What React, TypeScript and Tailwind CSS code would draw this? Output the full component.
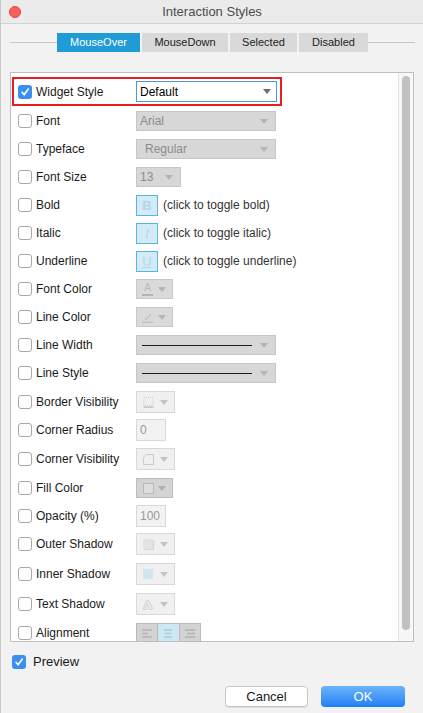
import type { ReactNode } from "react";

function Arrow({ color = "#b5b5b5" }: { color?: string }) {
  return (
    <svg width="8" height="5" viewBox="0 0 8 5" className="shrink-0">
      <path d="M0 0h8L4 5z" fill={color} />
    </svg>
  );
}

function Box({ on }: { on?: boolean }) {
  if (on) {
    return (
      <span className="flex h-[14px] w-[14px] shrink-0 items-center justify-center rounded-[3px] bg-[#3b8ff1]">
        <svg width="10" height="10" viewBox="0 0 10 10">
          <path
            d="M2 5.3 4.1 7.8 8.3 2"
            fill="none"
            stroke="#fff"
            strokeWidth="1.6"
            strokeLinecap="round"
            strokeLinejoin="round"
          />
        </svg>
      </span>
    );
  }
  return <span className="h-[14px] w-[14px] shrink-0 rounded-[3px] border border-[#a8a8a8] bg-white" />;
}

function GraySelect({ text, w, indent }: { text: string; w: string; indent?: boolean }) {
  return (
    <div
      className={`flex h-[20px] ${w} items-center justify-between border border-[#c6c6c6] bg-[#d7d7d7] pr-[7px] text-[12px] text-[#8c8c8c] ${
        indent ? "pl-[8px]" : "pl-[3px]"
      }`}
    >
      <span>{text}</span>
      <Arrow />
    </div>
  );
}

function LineSelect() {
  return (
    <div className="flex h-[20px] w-[140px] items-center gap-[8px] border border-[#c6c6c6] bg-[#d7d7d7] pl-[5px] pr-[7px]">
      <span className="h-px flex-1 bg-[#1e1e1e]" />
      <Arrow />
    </div>
  );
}

function SmallDrop({ children }: { children: ReactNode }) {
  return (
    <div className="flex h-[20px] w-[37px] items-center justify-between border border-[#c8c8c8] bg-[#dadada] pl-[5px] pr-[6px]">
      {children}
      <Arrow />
    </div>
  );
}

function LightDrop({ children, dark }: { children: ReactNode; dark?: boolean }) {
  return (
    <div
      className={`flex items-center justify-between border pl-[6px] pr-[6px] ${
        dark ? "h-[20px] w-[37px] border-[#bdbdbd] bg-[#d4d4d4]" : "h-[22px] w-[39px] border-[#d9d9d9] bg-[#f0f0f0]"
      }`}
    >
      {children}
      <Arrow color={dark ? "#b0b0b0" : "#c4c4c4"} />
    </div>
  );
}

function NumInput({ value }: { value: string }) {
  return (
    <div className="flex h-[22px] w-[30px] items-center border border-[#d9d9d9] bg-[#f2f2f2] pl-[3px] text-[12px] text-[#9a9a9a]">
      {value}
    </div>
  );
}

function Toggle({ letter, cls, hint }: { letter: string; cls: string; hint: string }) {
  return (
    <div className="flex items-center gap-[5px]">
      <div className="flex h-[21px] w-[22px] items-center justify-center border border-[#5ab4e2] bg-[#d2ebf7]">
        <span className={`text-[13px] leading-none text-[#b5d6e6] ${cls}`}>{letter}</span>
      </div>
      <span className="text-[12px] text-[#333]">{hint}</span>
    </div>
  );
}

function AlignLines({ kind }: { kind: "l" | "c" | "r" }) {
  const x = kind === "l" ? [0, 0, 0] : kind === "c" ? [1, 2, 1] : [0, 2, 0];
  const w = kind === "l" ? [10, 6, 10] : kind === "c" ? [8, 6, 8] : [10, 8, 10];
  return (
    <svg width="10" height="9" viewBox="0 0 10 9">
      {[1, 4.5, 8].map((y, i) => (
        <rect key={y} x={kind === "r" ? 10 - w[i] : x[i]} y={y - 0.75} width={w[i]} height="1.5" fill={kind === "c" ? "#a9cadb" : "#b2b2b2"} />
      ))}
    </svg>
  );
}

function Alignment() {
  return (
    <div className="flex h-[21px] w-[65px] border border-[#b9b9b9]">
      <div className="flex flex-1 items-center justify-center bg-[#d3d3d3]">
        <AlignLines kind="l" />
      </div>
      <div className="flex flex-1 items-center justify-center border-x border-[#b9b9b9] bg-[#cde8f5]">
        <AlignLines kind="c" />
      </div>
      <div className="flex flex-1 items-center justify-center bg-[#d3d3d3]">
        <AlignLines kind="r" />
      </div>
    </div>
  );
}

const rows: { label: string; mt: string; control: ReactNode }[] = [
  { label: "Font", mt: "mt-[1px]", control: <GraySelect text="Arial" w="w-[140px]" /> },
  { label: "Typeface", mt: "", control: <GraySelect text="Regular" w="w-[140px]" indent /> },
  { label: "Font Size", mt: "", control: <GraySelect text="13" w="w-[45px]" /> },
  { label: "Bold", mt: "", control: <Toggle letter="B" cls="font-bold" hint="(click to toggle bold)" /> },
  {
    label: "Italic",
    mt: "",
    control: <Toggle letter="I" cls="italic font-['Liberation_Serif',serif]" hint="(click to toggle italic)" />,
  },
  { label: "Underline", mt: "", control: <Toggle letter="U" cls="underline" hint="(click to toggle underline)" /> },
  {
    label: "Font Color",
    mt: "",
    control: (
      <SmallDrop>
        <span className="flex flex-col items-center">
          <span className="text-[10px] leading-[10px] text-[#b8b8b8]">A</span>
          <span className="mt-[1px] h-[2px] w-[11px] bg-[#b3b3b3]" />
        </span>
      </SmallDrop>
    ),
  },
  {
    label: "Line Color",
    mt: "",
    control: (
      <SmallDrop>
        <svg width="12" height="12" viewBox="0 0 12 12">
          <path d="M3 8 8.5 2.5l1 1L4 9H3z" fill="#c2c2c2" />
          <rect x="0" y="10.5" width="11" height="1.5" fill="#c2c2c2" />
        </svg>
      </SmallDrop>
    ),
  },
  { label: "Line Width", mt: "", control: <LineSelect /> },
  { label: "Line Style", mt: "", control: <LineSelect /> },
  {
    label: "Border Visibility",
    mt: "mt-[1px]",
    control: (
      <LightDrop>
        <svg width="11" height="11" viewBox="0 0 11 11">
          <rect x="1" y="0.5" width="9" height="8" fill="none" stroke="#cfcfcf" strokeDasharray="1 1" />
          <rect x="0.5" y="9.5" width="10" height="1.3" fill="#bcbcbc" />
        </svg>
      </LightDrop>
    ),
  },
  { label: "Corner Radius", mt: "", control: <NumInput value="0" /> },
  {
    label: "Corner Visibility",
    mt: "mt-[1px]",
    control: (
      <LightDrop>
        <svg width="11" height="11" viewBox="0 0 11 11">
          <path d="M0.5 10.5V5A4.5 4.5 0 0 1 5 0.5h5.5v10z" fill="none" stroke="#c9c9c9" />
        </svg>
      </LightDrop>
    ),
  },
  {
    label: "Fill Color",
    mt: "mt-[1px]",
    control: (
      <LightDrop dark>
        <span className="h-[11px] w-[11px] border border-[#b9b9b9] bg-[#dedede]" />
      </LightDrop>
    ),
  },
  { label: "Opacity (%)", mt: "", control: <NumInput value="100" /> },
  {
    label: "Outer Shadow",
    mt: "",
    control: (
      <LightDrop>
        <span className="h-[10px] w-[10px] rounded-[1px] bg-[#e3e3e3] shadow-[1px_1px_1px_#d2d2d2]" />
      </LightDrop>
    ),
  },
  {
    label: "Inner Shadow",
    mt: "mt-[2px]",
    control: (
      <LightDrop>
        <span className="h-[10px] w-[10px] bg-[#cfe6f1]" />
      </LightDrop>
    ),
  },
  {
    label: "Text Shadow",
    mt: "mt-[2px]",
    control: (
      <LightDrop>
        <span className="font-['Liberation_Serif',serif] text-[13px] leading-none font-bold text-[#ececec] [text-shadow:1px_0_0_#d0d0d0,-1px_0_0_#d0d0d0,0_1px_0_#d0d0d0,0_-1px_0_#d0d0d0]">
          A
        </span>
      </LightDrop>
    ),
  },
  { label: "Alignment", mt: "mt-[1px]", control: <Alignment /> },
];

const tabs = ["MouseOver", "MouseDown", "Selected", "Disabled"];
const tabW = ["w-[83px]", "w-[86px]", "w-[67px]", "w-[69px]"];

export default function App() {
  return (
    <div className="flex h-[713px] w-[423px] flex-col overflow-hidden border-l border-[#c8c8c8] bg-[#f2f2f2] font-['Liberation_Sans',Arial,sans-serif] text-[#1a1a1a]">
      {/* title bar */}
      <div className="grid h-[24px] shrink-0 grid-cols-[1fr_auto_1fr] items-center border-b border-[#d2d2d2] bg-[#ebebeb]">
        <div className="pl-[8px]">
          <span className="block h-[12px] w-[12px] rounded-full border border-[#e0443e] bg-[#fc605c]" />
        </div>
        <span className="text-[13px] text-[#4c4c4c]">Interaction Styles</span>
        <div />
      </div>

      {/* tabs */}
      <div className="mt-[9px] flex h-[19px] shrink-0 items-center pl-[9px] pr-[8px]">
        <span className="h-px flex-1 bg-[#c6c6c6]" />
        <div className="flex gap-[2px]">
          {tabs.map((t, i) => (
            <div
              key={t}
              className={`flex h-[19px] ${tabW[i]} items-center justify-center text-[11px] ${
                i === 0 ? "bg-[#1f9bd6] text-white" : "bg-[#d9d9d9] text-[#222]"
              }`}
            >
              {t}
            </div>
          ))}
        </div>
        <span className="h-px flex-1 bg-[#c6c6c6]" />
      </div>

      {/* panel */}
      <div className="ml-[9px] mt-[20px] flex h-[570px] w-[404px] shrink-0 overflow-hidden border border-[#bfbfbf] bg-white">
        <div className="flex-1 pt-[4px]">
          <div className="ml-[1px] flex h-[29px] w-[270px] items-center border-2 border-[#ec1c24] pl-[4px]">
            <Box on />
            <span className="ml-[4px] w-[100px] text-[12px]">Widget Style</span>
            <div className="flex h-[21px] w-[141px] items-center justify-between border border-[#3fa0d8] bg-white pl-[3px] pr-[5px] text-[12px] text-black">
              <span>Default</span>
              <Arrow color="#6e6e6e" />
            </div>
          </div>
          {rows.map((r) => (
            <div key={r.label} className={`flex h-[28px] items-center pl-[7px] ${r.mt}`}>
              <Box />
              <span className="ml-[4px] w-[100px] shrink-0 text-[12px]">{r.label}</span>
              {r.control}
            </div>
          ))}
        </div>
        <div className="flex w-[15px] justify-center border-l border-[#e2e2e2] bg-[#f7f7f7] pb-[11px] pt-[3px]">
          <div className="w-[8px] rounded-full bg-[#c1c1c1]" />
        </div>
      </div>

      {/* preview */}
      <div className="mt-[13px] flex h-[14px] items-center gap-[7px] pl-[11px]">
        <Box on />
        <span className="text-[13px]">Preview</span>
      </div>

      {/* buttons */}
      <div className="mt-[17px] flex justify-end gap-[13px] pr-[18px]">
        <button className="h-[21px] w-[83px] rounded-[4px] border border-[#c8c8c8] bg-white text-[13px] text-[#1a1a1a] shadow-[0_1px_0_#dcdcdc]">
          Cancel
        </button>
        <button className="h-[21px] w-[84px] rounded-[4px] bg-gradient-to-b from-[#6cb3fa] to-[#1a80f4] text-[13px] text-white">
          OK
        </button>
      </div>
    </div>
  );
}
